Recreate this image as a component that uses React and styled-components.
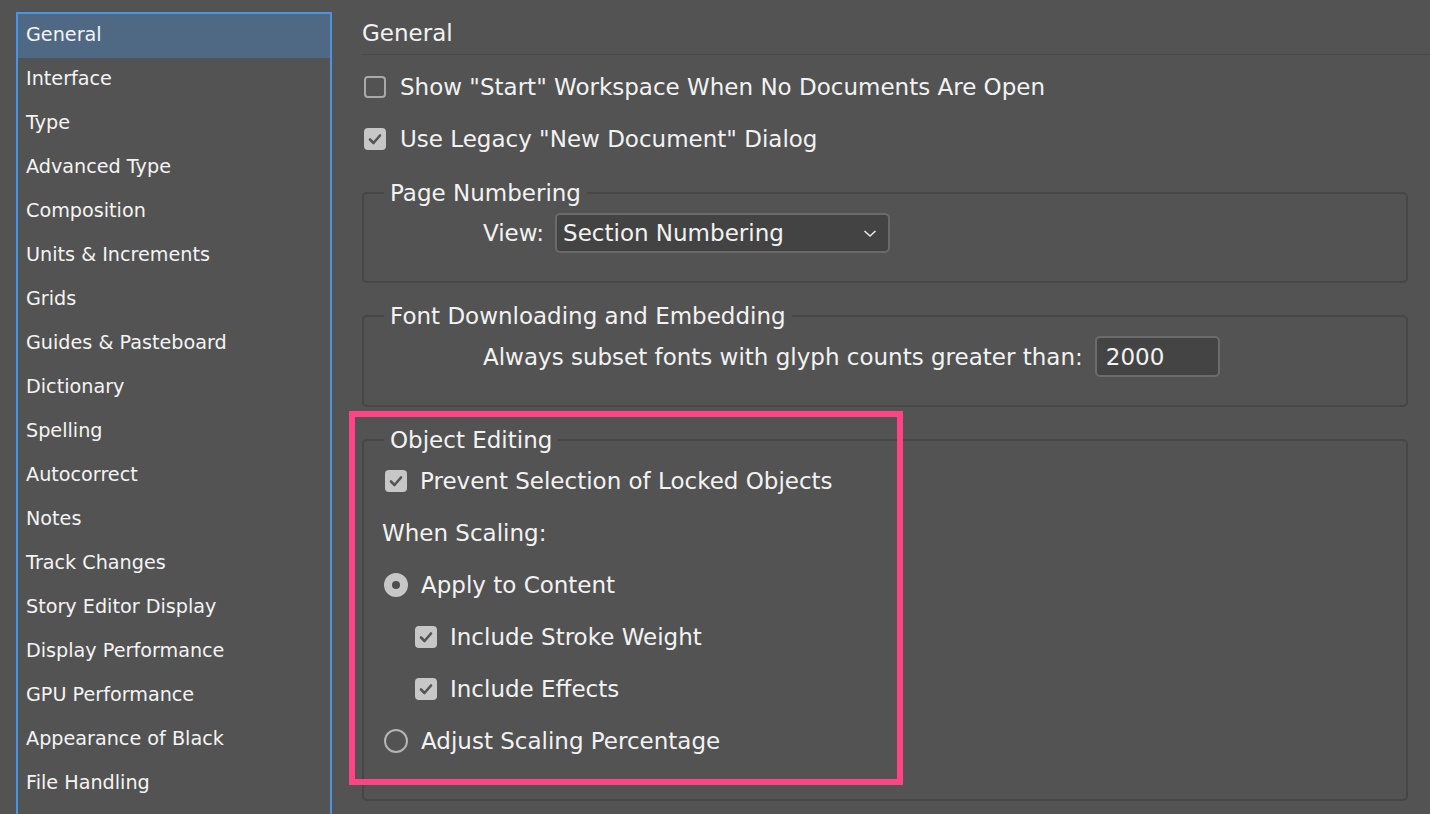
import React from "react";
import styled, { createGlobalStyle } from "styled-components";

const GlobalStyle = createGlobalStyle`
  html, body {
    margin: 0;
    padding: 0;
    background: #535353;
    overflow: hidden;
  }
  body {
    font-family: "DejaVu Sans", "Liberation Sans", sans-serif;
    color: #f2f2f2;
  }
`;

const Page = styled.div`
  display: flex;
  height: 814px;
  padding: 12px 0 0 16px;
  box-sizing: border-box;
  overflow: hidden;
`;

const Sidebar = styled.ul`
  list-style: none;
  margin: 0;
  padding: 0;
  width: 316px;
  min-height: 830px;
  box-sizing: border-box;
  border: 2px solid #4d93dd;
  flex-shrink: 0;
`;

const NavItem = styled.li`
  height: 44px;
  line-height: 42px;
  padding-left: 8px;
  font-size: 19.2px;
  color: #f4f4f4;
  white-space: nowrap;
  background: ${(props) => (props.active ? "#4f6985" : "transparent")};
`;

const Main = styled.div`
  flex: 1;
  margin-left: 30px;
  display: flex;
  flex-direction: column;
  font-size: 23px;
  white-space: nowrap;
`;

const Header = styled.div`
  height: 42px;
  line-height: 42px;
  border-bottom: 1px solid #484848;
`;

const Row = styled.div`
  display: flex;
  align-items: center;
  height: 52px;
  gap: ${(props) => props.gap || 14}px;
  padding-left: ${(props) => props.indent || 0}px;
  margin-top: ${(props) => props.top || 0}px;
`;

const Box = styled.span`
  width: 22px;
  height: 22px;
  box-sizing: border-box;
  border-radius: 4px;
  flex-shrink: 0;
  display: flex;
  align-items: center;
  justify-content: center;
  border: ${(props) => (props.checked ? "none" : "2px solid #a9a9a9")};
  background: ${(props) => (props.checked ? "#c7c7c7" : "transparent")};
`;

const Radio = styled.span`
  width: 24px;
  height: 24px;
  box-sizing: border-box;
  border-radius: 50%;
  flex-shrink: 0;
  display: flex;
  align-items: center;
  justify-content: center;
  border: ${(props) => (props.checked ? "none" : "2px solid #b4b4b4")};
  background: ${(props) => (props.checked ? "#c7c7c7" : "transparent")};

  &::after {
    content: "";
    display: ${(props) => (props.checked ? "block" : "none")};
    width: 8px;
    height: 8px;
    border-radius: 50%;
    background: #4e4e4e;
  }
`;

const Group = styled.fieldset`
  margin: ${(props) => props.top}px 22px 0 0;
  border: 2px solid #464646;
  border-radius: 5px;
  padding: ${(props) => props.pt || 8}px 0 ${(props) => props.pb || 28}px 20px;
  min-width: 0;
`;

const Legend = styled.legend`
  padding: 0 6px;
  line-height: 24px;
  font-size: 23px;
`;

const FieldRow = styled.div`
  display: flex;
  align-items: center;
  gap: ${(props) => props.gap}px;
  padding-left: 99px;
`;

const Select = styled.div`
  width: 335px;
  height: 40px;
  box-sizing: border-box;
  border: 2px solid #6a6a6a;
  border-radius: 5px;
  background: #434343;
  display: flex;
  align-items: center;
  justify-content: space-between;
  padding: 0 11px 0 6px;
`;

const NumberField = styled.div`
  width: 125px;
  height: 41px;
  box-sizing: border-box;
  border: 2px solid #6c6c6c;
  border-radius: 5px;
  background: #444444;
  display: flex;
  align-items: center;
  padding-left: 9px;
`;

const SubHead = styled.div`
  height: 52px;
  line-height: 52px;
  margin-left: -2px;
`;

const HighlightWrap = styled.div`
  position: relative;
  margin-top: 21px;
`;

const Highlight = styled.div`
  position: absolute;
  left: -13px;
  top: -17px;
  width: 554px;
  height: 374px;
  box-sizing: border-box;
  border: 6px solid #ff4385;
  pointer-events: none;
`;

const Check = () => (
  <svg width="14" height="12" viewBox="0 0 14 12">
    <polyline points="2,6.5 5.5,10 12,2.5" fill="none" stroke="#555" strokeWidth="2.6" strokeLinecap="round" strokeLinejoin="round" />
  </svg>
);

const Chevron = () => (
  <svg width="14" height="9" viewBox="0 0 14 9">
    <polyline points="1.5,2 7,7 12.5,2" fill="none" stroke="#e8e8e8" strokeWidth="1.6" />
  </svg>
);

const CheckItem = ({ checked, children, indent, gap, top }) => (
  <Row indent={indent} gap={gap} top={top}>
    <Box checked={checked}>{checked && <Check />}</Box>
    <span>{children}</span>
  </Row>
);

const RadioItem = ({ checked, children }) => (
  <Row gap={13}>
    <Radio checked={checked} />
    <span>{children}</span>
  </Row>
);

const sections = [
  "General",
  "Interface",
  "Type",
  "Advanced Type",
  "Composition",
  "Units & Increments",
  "Grids",
  "Guides & Pasteboard",
  "Dictionary",
  "Spelling",
  "Autocorrect",
  "Notes",
  "Track Changes",
  "Story Editor Display",
  "Display Performance",
  "GPU Performance",
  "Appearance of Black",
  "File Handling",
];

const App = () => {
  return (
    <>
      <GlobalStyle />
      <Page>
        <Sidebar>
          {sections.map((name, i) => (
            <NavItem key={name} active={i === 0}>
              {name}
            </NavItem>
          ))}
        </Sidebar>
        <Main>
          <Header>General</Header>
          <CheckItem top={6} indent={2}>Show "Start" Workspace When No Documents Are Open</CheckItem>
          <CheckItem checked indent={2}>Use Legacy "New Document" Dialog</CheckItem>

          <Group top={16}>
            <Legend>Page Numbering</Legend>
            <FieldRow gap={11}>
              <span>View:</span>
              <Select>
                <span>Section Numbering</span>
                <Chevron />
              </Select>
            </FieldRow>
          </Group>

          <Group top={21}>
            <Legend>Font Downloading and Embedding</Legend>
            <FieldRow gap={12}>
              <span>Always subset fonts with glyph counts greater than:</span>
              <NumberField>2000</NumberField>
            </FieldRow>
          </Group>

          <HighlightWrap>
            <Group top={0} pt={3} pb={32}>
              <Legend>Object Editing</Legend>
              <CheckItem checked gap={13} indent={1}>Prevent Selection of Locked Objects</CheckItem>
              <SubHead>When Scaling:</SubHead>
              <RadioItem checked>Apply to Content</RadioItem>
              <CheckItem checked indent={31} gap={13}>Include Stroke Weight</CheckItem>
              <CheckItem checked indent={31} gap={13}>Include Effects</CheckItem>
              <RadioItem>Adjust Scaling Percentage</RadioItem>
            </Group>
            <Highlight />
          </HighlightWrap>
        </Main>
      </Page>
    </>
  );
};

export default App;
